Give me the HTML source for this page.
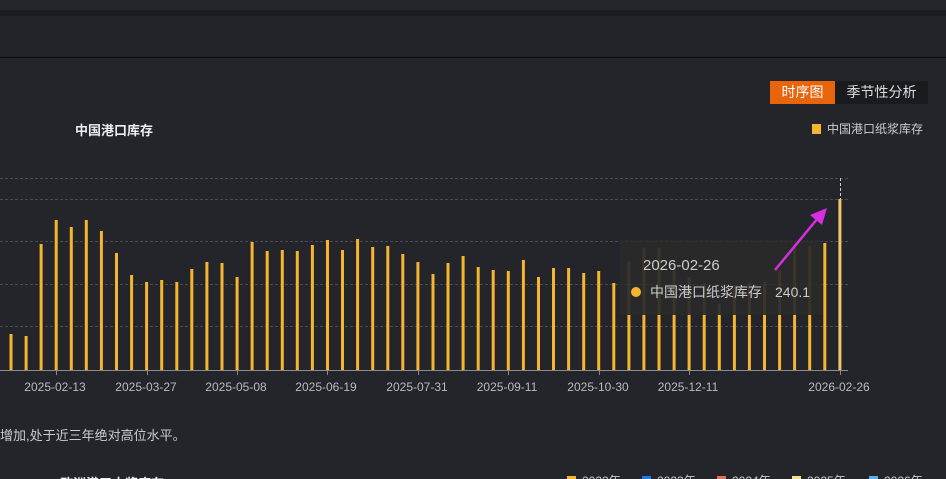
<!DOCTYPE html>
<html><head><meta charset="utf-8"><style>
html,body{margin:0;padding:0;background:#24252a;width:946px;height:479px;overflow:hidden;font-family:"Liberation Sans","Noto Sans CJK SC",sans-serif;position:relative}
.a{position:absolute}
</style></head><body>
<div class="a" style="left:0;top:0;width:946px;height:10px;background:#25262b"></div>
<div class="a" style="left:0;top:10px;width:946px;height:6px;background:#1b1c20"></div>
<div class="a" style="left:0;top:16px;width:946px;height:41px;background:#232429"></div>
<div class="a" style="left:0;top:57px;width:946px;height:1px;background:#0c0c0e"></div>
<div class="a" style="left:770px;top:81px;width:65px;height:23px;background:#e8650c;color:#fff;font-size:14px;line-height:23px;text-align:center">时序图</div>
<div class="a" style="left:835px;top:81px;width:93px;height:23px;background:#1a1b1e;color:#ddd;font-size:14px;line-height:23px;text-align:center">季节性分析</div>
<div class="a" style="left:75px;top:120px;color:#eee;font-size:13px;font-weight:bold">中国港口库存</div>
<div class="a" style="left:812px;top:124px;width:9px;height:10px;background:#f5b52e"></div>
<div class="a" style="left:827px;top:120px;color:#ccc;font-size:12px">中国港口纸浆库存</div>
<svg class="a" style="left:0;top:0" width="946" height="479">
<g stroke="#4a4b50" stroke-dasharray="3,2" stroke-width="1">
<line x1="0" y1="178.5" x2="848" y2="178.5"/><line x1="0" y1="199.5" x2="848" y2="199.5"/><line x1="0" y1="241.5" x2="848" y2="241.5"/><line x1="0" y1="284.5" x2="848" y2="284.5"/><line x1="0" y1="326.5" x2="848" y2="326.5"/>
</g>
<line x1="840.5" y1="178" x2="840.5" y2="199" stroke="#ccc" stroke-dasharray="3,2"/>
<g id="bars" fill="#f5b52e"></g>
<line x1="0" y1="370.5" x2="848" y2="370.5" stroke="#8a8c92"/>
<g stroke="#8a8c92"><line x1="56.5" y1="370" x2="56.5" y2="375"/><line x1="147.5" y1="370" x2="147.5" y2="375"/><line x1="237.5" y1="370" x2="237.5" y2="375"/><line x1="327.5" y1="370" x2="327.5" y2="375"/><line x1="418.5" y1="370" x2="418.5" y2="375"/><line x1="508.5" y1="370" x2="508.5" y2="375"/><line x1="599.5" y1="370" x2="599.5" y2="375"/><line x1="689.5" y1="370" x2="689.5" y2="375"/><line x1="840.5" y1="370" x2="840.5" y2="375"/></g>
<g fill="#bbb" font-size="12" text-anchor="middle" font-family="Liberation Sans,sans-serif">
<text x="55" y="391">2025-02-13</text><text x="146" y="391">2025-03-27</text><text x="236" y="391">2025-05-08</text><text x="326" y="391">2025-06-19</text><text x="417" y="391">2025-07-31</text><text x="507" y="391">2025-09-11</text><text x="598" y="391">2025-10-30</text><text x="688" y="391">2025-12-11</text><text x="839" y="391">2026-02-26</text>
</g>
<rect x="620" y="240" width="202" height="75" fill="#2a2a2a" fill-opacity="0.78"/>
<text x="643" y="270" fill="#ccc" font-size="15" font-family="Liberation Sans,sans-serif">2026-02-26</text>
<circle cx="636" cy="292" r="5" fill="#f5b52e"/>
<text x="650" y="297" fill="#ccc" font-size="14" font-family="Liberation Sans,Noto Sans CJK SC,sans-serif">中国港口纸浆库存</text>
<text x="775" y="297" fill="#ccc" font-size="14" font-family="Liberation Sans,sans-serif">240.1</text>
<line x1="775" y1="270" x2="818" y2="218" stroke="#d62ee0" stroke-width="2.5"/>
<polygon points="827,208 810,215 822,225" fill="#d62ee0"/>
</svg>
<div class="a" style="left:0;top:425px;color:#ccc;font-size:13px">增加,处于近三年绝对高位水平。</div>
<div class="a" style="left:60px;top:473px;color:#eee;font-size:13px;font-weight:bold">欧洲港口木浆库存</div>
<div class="a" style="left:567px;top:476px;width:9px;height:10px;background:#f5b52e"></div><div class="a" style="left:582px;top:472px;color:#ccc;font-size:12px">2022年</div>
<div class="a" style="left:642px;top:476px;width:9px;height:10px;background:#1e7be0"></div><div class="a" style="left:657px;top:472px;color:#ccc;font-size:12px">2023年</div>
<div class="a" style="left:717px;top:476px;width:9px;height:10px;background:#e07060"></div><div class="a" style="left:732px;top:472px;color:#ccc;font-size:12px">2024年</div>
<div class="a" style="left:792px;top:476px;width:9px;height:10px;background:#f5e08a"></div><div class="a" style="left:807px;top:472px;color:#ccc;font-size:12px">2025年</div>
<div class="a" style="left:869px;top:476px;width:9px;height:10px;background:#5ab0e0"></div><div class="a" style="left:884px;top:472px;color:#ccc;font-size:12px">2026年</div>
<script>
var t=[334,336,244,220,227,220,231,253,275,282,280,282,269,262,263,277,242,251,250,251,245,240,250,239,247,246,254,262,274,263,256,267,270,271,260,277,268,268,273,271,283,261,248,248,265,277,283,304,285,283,282,270,248,246,243,199];
var g=document.getElementById('bars'),s='';
for(var i=0;i<t.length;i++){var x=11+i*15.07-1.5;var last=i==t.length-1;
var y=t[i];
if(x>618&&x<822&&y<315&&!last){s+='<rect x="'+x.toFixed(1)+'" y="'+y+'" width="3" height="'+(315-y)+'" fill="#6e5a2e"/>';s+='<rect x="'+x.toFixed(1)+'" y="315" width="3" height="55"/>';}
else s+='<rect x="'+x.toFixed(1)+'" y="'+y+'" width="3" height="'+(370-y)+'"'+(last?' fill="#f3c765"':'')+'/>';}
g.innerHTML=s;
</script>
</body></html>
